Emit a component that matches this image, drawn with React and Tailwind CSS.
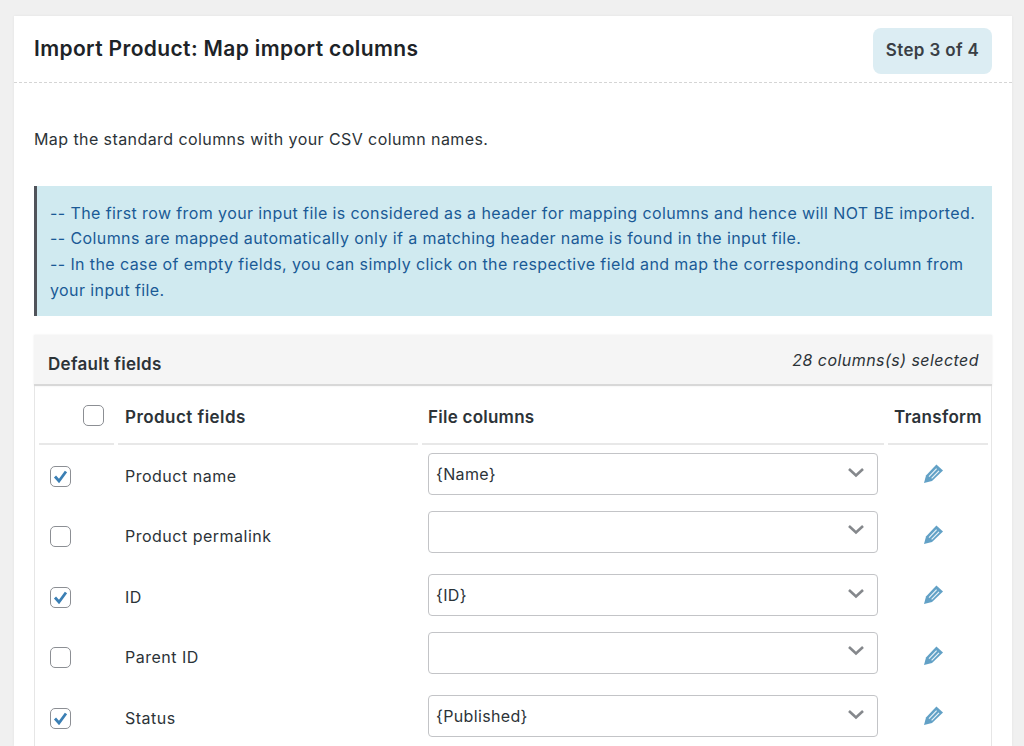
const rows = [
  { name: "Product name", value: "{Name}", checked: true },
  { name: "Product permalink", value: "", checked: false },
  { name: "ID", value: "{ID}", checked: true },
  { name: "Parent ID", value: "", checked: false },
  { name: "Status", value: "{Published}", checked: true },
];

function Box({ checked }) {
  return (
    <span className="flex h-[21px] w-[21px] items-center justify-center rounded-[5px] border border-[#8c8f94] bg-white">
      {checked && (
        <svg width="15" height="13" viewBox="0 0 15 13">
          <path d="M2 6.5 L6 11 L13 1.5" fill="none" stroke="#3b7fb4" strokeWidth="2.8" />
        </svg>
      )}
    </span>
  );
}

function Pencil() {
  return (
    <svg width="21" height="21" viewBox="0 0 21 21">
      <path d="M1 20 L3 12.6 L13.4 1.6 L20 7.6 L9 18 Z" fill="#62a1c6" />
      <path d="M6 13.6 L13.6 5.6 M8.6 15.4 L16 7.8" stroke="#e8f2f7" strokeWidth="1.2" />
    </svg>
  );
}

function Select({ value }) {
  return (
    <div className={`flex h-[42px] w-[450px] items-center justify-between rounded-[4px] border border-[#c3c4c7] pl-[7px] pr-[12px] text-[16px] tracking-[0.35px] text-[#2c3338] ${value ? "mt-2" : "mt-[5px]"}`}>
      <span className="relative top-0">{value}</span>
      <svg className="relative -top-0.5" width="18" height="11" viewBox="0 0 18 11">
        <path d="M2 2 L9 8.5 L16 2" fill="none" stroke="#85888c" strokeWidth="2.6" />
      </svg>
    </div>
  );
}

export default function App() {
  return (
    <div className="h-[746px] overflow-hidden bg-[#f0f0f0] pt-4 pl-[14px] pr-3 font-['Inter','Liberation_Sans',sans-serif] text-[#2c3338]">
      <div className="h-[730px] bg-white shadow-[0_0_3px_rgba(0,0,0,0.06)]">
        <header className="flex h-[67px] items-center justify-between border-b border-dashed border-[#d5d5d5] pl-5 pr-5">
          <h1 className="text-[21px] font-semibold tracking-[0.36px] text-[#1d2327]">Import Product: Map import columns</h1>
          <div className="relative top-[2px] flex h-[46px] w-[119px] items-center justify-center rounded-[8px] bg-[#dcedf3] text-[17px] font-semibold tracking-[0.35px] text-[#3a3f45]">Step 3 of 4</div>
        </header>
        <div className="pl-5 pr-5">
          <p className="pt-[45px] text-[16px] leading-[22px] tracking-[0.42px]">Map the standard columns with your CSV column names.</p>
          <div className="mt-[36px] h-[130px] border-l-[3px] border-[#50535a] bg-[#d0eaf0] pl-[13px] pt-[14.6px] text-[16px] leading-[25.7px] tracking-[0.4px] text-[#1a5a96]">
            <div>-- The first row from your input file is considered as a header for mapping columns and hence will NOT BE imported.</div>
            <div>-- Columns are mapped automatically only if a matching header name is found in the input file.</div>
            <div>-- In the case of empty fields, you can simply click on the respective field and map the corresponding column from your input file.</div>
          </div>
          <section className="mt-[19px]">
            <div className="flex h-[51px] items-center justify-between border-b-2 border-[#d8d8d8] bg-[#f5f5f5] pl-[14px] pr-[13px] shadow-[0_0_2px_rgba(0,0,0,0.08)]">
              <span className="relative top-[5px] text-[17px] font-semibold tracking-[0.3px]">Default fields</span>
              <span className="relative top-0 text-[16px] italic tracking-[0.45px]">28 columns(s) selected</span>
            </div>
            <div className="border-x border-[#e6e6e6] px-1 pt-[3px]">
              <div className="grid h-[56px] grid-cols-[75px_300px_462px_100px] gap-x-1">
                <div className="flex items-center justify-end border-b-2 border-[#e8e8e8] pb-[1px] pr-[10px]"><Box checked={false} /></div>
                <div className="flex items-center border-b-2 border-[#e8e8e8] pl-[7px] pt-[4px] text-[17px] font-semibold tracking-[0.45px]">Product fields</div>
                <div className="flex items-center border-b-2 border-[#e8e8e8] pl-[6px] pt-[4px] text-[17px] font-semibold tracking-[0.25px]">File columns</div>
                <div className="flex items-center justify-center border-b-2 border-[#e8e8e8] pt-[4px] text-[17px] font-semibold tracking-[0.3px]">Transform</div>
              </div>
              {rows.map((r) => (
                <div key={r.name} className="grid h-[60.5px] grid-cols-[75px_300px_462px_100px] gap-x-1">
                  <div className="flex items-center pl-[11px] pt-[2px]"><Box checked={r.checked} /></div>
                  <div className="flex items-center pl-[7px] pt-[1px] text-[16px] tracking-[0.5px]">{r.name}</div>
                  <div className="pl-[6px]"><Select value={r.value} /></div>
                  <div className="flex items-center justify-center pb-[3px] pr-[10px]"><Pencil /></div>
                </div>
              ))}
            </div>
          </section>
        </div>
      </div>
    </div>
  );
}
